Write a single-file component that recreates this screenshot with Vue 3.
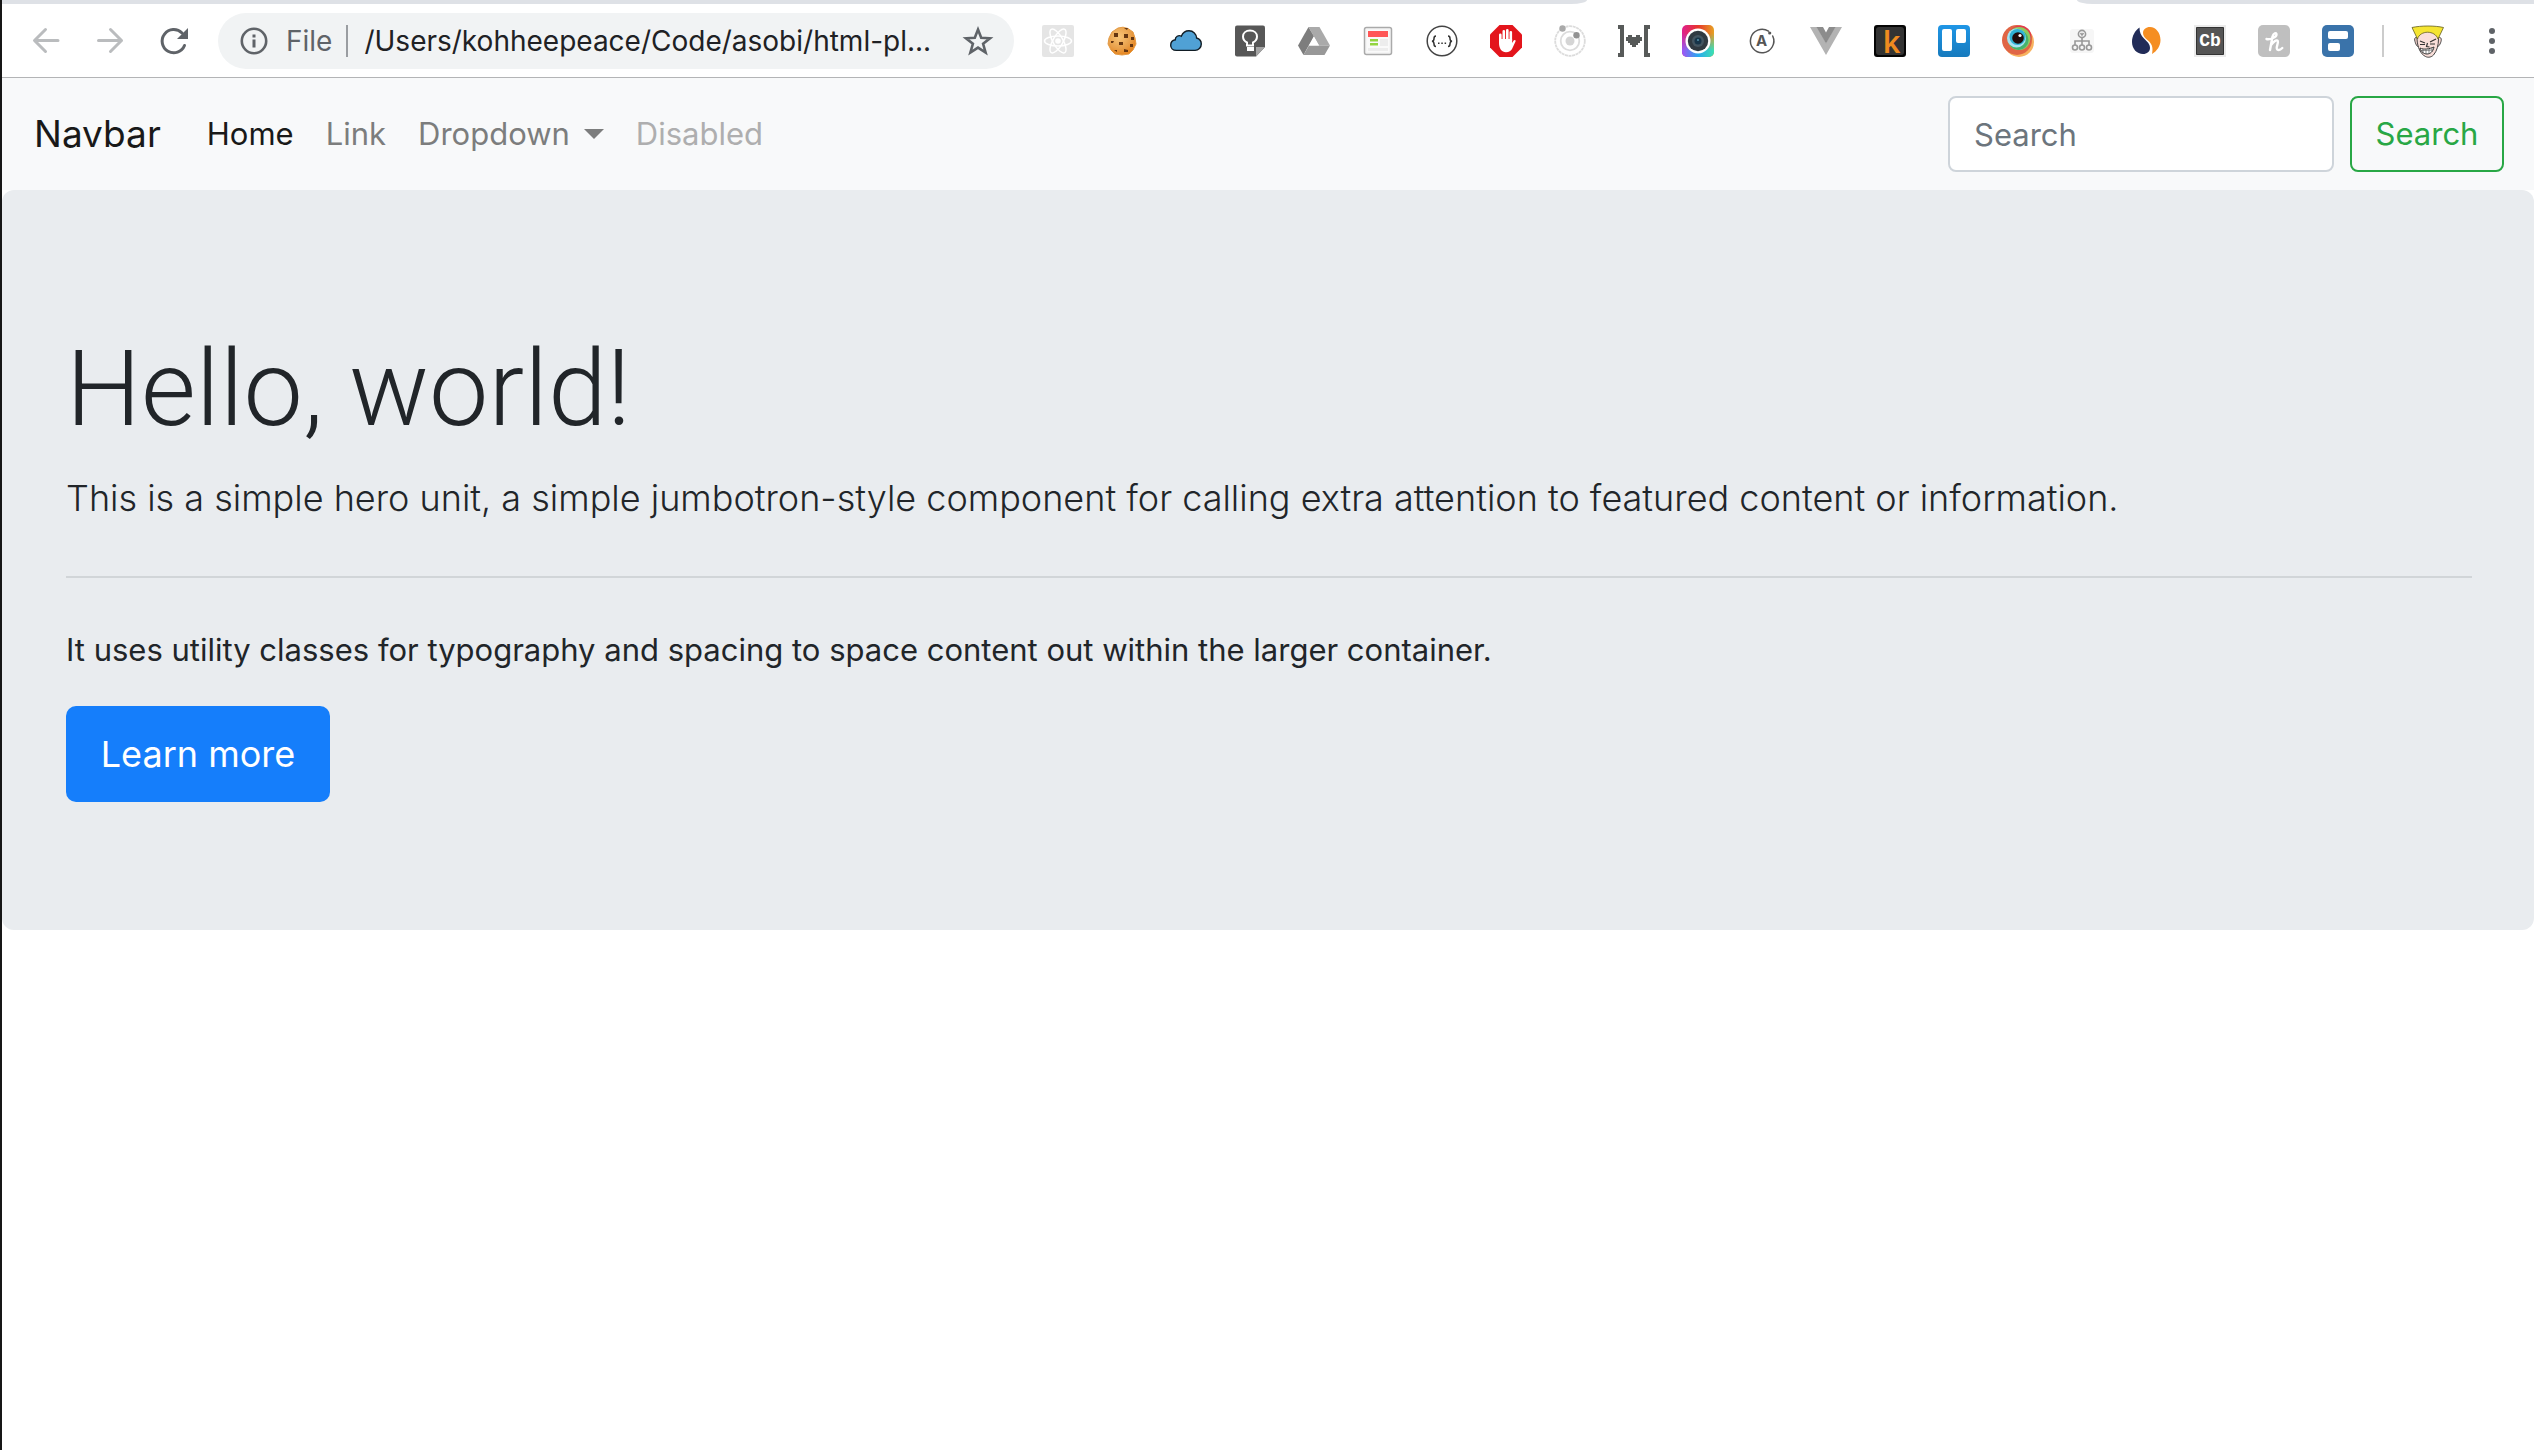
<script setup>
import { ref } from 'vue'

const query = ref('')
</script>

<template>
  <div class="window">
    <div class="tabstrip" aria-hidden="true">
      <div class="strip-left"></div>
      <div class="strip-active"></div>
      <div class="strip-right"></div>
    </div>

    <header class="toolbar">
      <button class="tool" type="button" aria-label="Back" disabled>
        <svg viewBox="0 0 32 32"><path d="M28 15.500H5M15.500 4.500 4.500 15.500l11 11" fill="none" stroke="#babcbe" stroke-width="3" stroke-linecap="round" stroke-linejoin="round" /></svg>
      </button>
      <button class="tool" type="button" aria-label="Forward" disabled>
        <svg viewBox="0 0 32 32"><path d="M4.500 15.500h23M16.500 4.500l11 11-11 11" fill="none" stroke="#babcbe" stroke-width="3" stroke-linecap="round" stroke-linejoin="round" /></svg>
      </button>
      <button class="tool" type="button" aria-label="Reload">
        <svg viewBox="0 0 32 32"><path d="M26.500 20.500A11.600 11.600 0 1 1 24 8" fill="none" stroke="#5f6368" stroke-width="3" stroke-linecap="round" /><path d="M30 3v11H19z" fill="#5f6368" /></svg>
      </button>

      <div class="omnibox">
        <svg class="info" viewBox="0 0 32 32" aria-hidden="true"><circle cx="16" cy="16" r="12.200" fill="none" stroke="#5f6368" stroke-width="2.600" /><path d="M14.500 9.500h3v3h-3zM14.500 14.500h3v8h-3z" fill="#5f6368" /></svg>
        <span class="scheme">File</span>
        <span class="bar"></span>
        <span class="url">/Users/kohheepeace/Code/asobi/html-pl...</span>
        <button class="star" type="button" aria-label="Bookmark this page">
          <svg viewBox="0 0 32 32"><path d="M16 4.500l3.200 8.300 8.800.5-6.900 5.500 2.500 8.700-7.600-4.900-7.600 4.900 2.500-8.700L4 13.300l8.800-.5z" fill="none" stroke="#5f6368" stroke-width="2.600" /></svg>
        </button>
      </div>

      <button class="tool" type="button" aria-label="React">
        <svg viewBox="0 0 32 32"><rect width="32" height="32" rx="2" fill="#e5e5e5" /><g fill="none" stroke="#fff" stroke-width="1.500"><ellipse cx="16" cy="16" rx="13.500" ry="5" /><ellipse cx="16" cy="16" rx="13.500" ry="5" transform="rotate(60 16 16)" /><ellipse cx="16" cy="16" rx="13.500" ry="5" transform="rotate(120 16 16)" /></g><circle cx="16" cy="16" r="2.800" fill="#fff" /></svg>
      </button>
      <button class="tool" type="button" aria-label="Cookies">
        <svg viewBox="0 0 32 32">
          <defs><radialGradient id="cookie" cx=".4" cy=".35" r=".7"><stop offset="0" stop-color="#f8c578" /><stop offset=".6" stop-color="#e9a04a" /><stop offset="1" stop-color="#e57f16" /></radialGradient></defs>
          <path d="M12 3l5-.8 5 1.300 5 3.500 2 6 1 6-3 6-4 4-7 1-7-1-4-4-3-6 1-6 3-6z" fill="url(#cookie)" stroke="#e39a45" stroke-linejoin="round" />
          <path d="M8 8h4v4H8zM18 9h4v4h-4zM13 17h4v3h-4zM18 3h4l-1 2zM25 12h3v3h-3zM24 19h3v3h-3zM5 16h3l-1 2H5zM8 25h3v2zM18 24l4 1v2h-4z" fill="#653611" />
        </svg>
      </button>
      <button class="tool" type="button" aria-label="Cloud">
        <svg viewBox="0 0 32 32"><path d="M6.500 25.400C2.500 25.400.7 22.800.7 20.200c0-3 2-5 4.600-5.400-.2-3 3.200-5.200 6-3.600C12.800 7.700 15.500 5.800 19 5.800c4.300 0 7.400 3.200 7.600 7.200 3 .8 4.700 3.300 4.700 6.100 0 3.600-2.800 6.300-6.300 6.300z" fill="#50a1d5" stroke="#111c24" stroke-width="1.400" /></svg>
      </button>
      <button class="tool" type="button" aria-label="Keep">
        <svg viewBox="0 0 32 32"><path d="M3 .5h26q2 0 2 2V22l-9 9.500H3q-2 0-2-2v-27q0-2 2-2z" fill="#575757" /><path d="M31 22v0l-9 9.500V22z" fill="#a5a5a5" /><path d="M13 20.500v-3c-3-1.500-4-4-4-6 0-3.500 3-6 7-6s7 2.500 7 6c0 2-1 4.500-4 6v3z" fill="none" stroke="#fff" stroke-width="2" /><path d="M13 22h7v4h-7z" fill="#fff" /></svg>
      </button>
      <button class="tool" type="button" aria-label="Drive">
        <svg viewBox="0 0 32 32"><path d="M10.500 2 0 20.500 5.500 30 16 11z" fill="#7d7d7d" /><path d="M10.500 2h11L32 20.500H21z" fill="#aaa" /><path d="M11 20.500h21L26.500 30h-21z" fill="#989898" /><path d="M16 12l5 8.500H11z" fill="#fff" /></svg>
      </button>
      <button class="tool" type="button" aria-label="Page layout">
        <svg viewBox="0 0 32 32"><rect x="2.500" y="2.500" width="27" height="27" rx="2" fill="#f5f5f5" stroke="#aaa" stroke-width="1.500" /><path d="M5 5h22v22H5z" fill="#fafafa" /><path d="M6 6h20v6H6z" fill="#ff5757" /><path d="M8 14h8v2.500H8zM8 18h8v2.500H8z" fill="#93d53f" /><path d="M18 14h8v7h-8zM6 23h20v3H6z" fill="#ededed" /></svg>
      </button>
      <button class="tool" type="button" aria-label="JSON viewer">
        <svg viewBox="0 0 32 32"><circle cx="16" cy="16" r="14.800" fill="#fff" stroke="#444" stroke-width="1.500" /><path d="M10 11c-2 0-2 1-2 2.500S8 16 6 16.200c2 .3 2 1.300 2 2.800S8 21.500 10 21.500M22 11c2 0 2 1 2 2.500s0 2.500 2 2.700c-2 .3-2 1.300-2 2.800s0 2.500-2 2.500" fill="none" stroke="#333" stroke-width="1.500" /><path d="M12 17.500h1.500v1.500H12zM15.300 17.500h1.500v1.500h-1.500zM18.600 17.500h1.500v1.500h-1.500z" fill="#333" /></svg>
      </button>
      <button class="tool" type="button" aria-label="Ad blocker">
        <svg viewBox="0 0 32 32"><path d="M9.500 0h13L32 9.500v13L22.500 32h-13L0 22.500v-13z" fill="#e3151c" /><path d="M10.300 17V9.800M13.800 16V6.300M17.300 15V5.300M20.800 16V7.300" fill="none" stroke="#fff" stroke-width="2.600" stroke-linecap="round" /><path d="M9 14h13.100v4l1.600-2.500c1-1.200 2.300-.5 1.800 1L22 24c-1 2-3 3.200-6 3.200-4.300 0-7-3.700-7-9.200z" fill="#fff" /></svg>
      </button>
      <button class="tool" type="button" aria-label="Orbit">
        <svg viewBox="0 0 32 32"><g fill="none" stroke="#dcdcdc" stroke-width="1.800"><circle cx="16" cy="16" r="14.800" stroke-dasharray="3 .6" /><circle cx="16" cy="16" r="9.300" /></g><circle cx="16" cy="16" r="4.500" fill="#d5d5d5" /><circle cx="8.500" cy="3.500" r="3.200" fill="#a9a9a9" /><circle cx="22.500" cy="10.200" r="3.200" fill="#929292" /></svg>
      </button>
      <button class="tool" type="button" aria-label="Bracket heart">
        <svg viewBox="0 0 32 32"><path d="M0 0h6v32H0v-4h2V4H0zM26 0h6v4h-2v24h2v4h-6z" fill="#575a59" /><path d="M10 10h4v2h4v-2h4v2h2v4h-2v2h-2v2h-2v2h-4v-2h-2v-2h-2v-2H8v-4h2z" fill="#575a59" /></svg>
      </button>
      <button class="tool" type="button" aria-label="Camera">
        <svg viewBox="0 0 32 32">
          <defs>
            <linearGradient id="cam-top"><stop offset="0" stop-color="#e0208f" /><stop offset=".5" stop-color="#e6352b" /><stop offset="1" stop-color="#e7a224" /></linearGradient>
            <linearGradient id="cam-bottom"><stop offset="0" stop-color="#a054f5" /><stop offset=".5" stop-color="#29a8ef" /><stop offset="1" stop-color="#3ce0b2" /></linearGradient>
            <linearGradient id="cam-fade" x2="0" y2="1"><stop offset=".25" stop-color="#000" /><stop offset=".8" stop-color="#fff" /></linearGradient>
            <mask id="cam-mask"><rect width="32" height="32" fill="url(#cam-fade)" /></mask>
          </defs>
          <rect width="32" height="32" rx="5" fill="url(#cam-top)" /><rect width="32" height="32" rx="5" fill="url(#cam-bottom)" mask="url(#cam-mask)" />
          <circle cx="16" cy="16" r="12.500" fill="#fff" /><circle cx="16" cy="16" r="10.200" fill="#303a42" /><circle cx="16" cy="16" r="6" fill="#435561" /><circle cx="16" cy="16" r="3.500" fill="#163449" /><circle cx="16" cy="15" r="1" fill="#5590aa" />
        </svg>
      </button>
      <button class="tool" type="button" aria-label="Apollo">
        <svg viewBox="0 0 32 32"><path d="M22.500 6.200A11.700 11.700 0 1 0 26.700 11" fill="none" stroke="#555" stroke-width="1.500" stroke-linecap="round" /><circle cx="23.700" cy="8" r="1.600" fill="#555" /><text x="15.500" y="21" class="glyph-a" text-anchor="middle">A</text></svg>
      </button>
      <button class="tool" type="button" aria-label="Vue">
        <svg viewBox="0 0 32 32"><path d="M0 2h7l9 16 9-16h7L16 30z" fill="#b3b3b3" /><path d="M6.500 2H13l3 5.500L19 2h6.500L16 18.500z" fill="#8c8c8c" /></svg>
      </button>
      <button class="tool" type="button" aria-label="Kindle">
        <svg viewBox="0 0 32 32"><rect width="32" height="32" rx="3" fill="#050505" /><rect x="2" y="2" width="28" height="28" rx="3" fill="#333" /><text x="17.500" y="28" class="glyph-k" text-anchor="middle">k</text></svg>
      </button>
      <button class="tool" type="button" aria-label="Trello">
        <svg viewBox="0 0 32 32"><defs><linearGradient id="trello" x2="0" y2="1"><stop offset="0" stop-color="#1f96e6" /><stop offset="1" stop-color="#167abd" /></linearGradient></defs><rect width="32" height="32" rx="4" fill="url(#trello)" /><rect x="4" y="4" width="10" height="22" rx="2" fill="#fff" /><rect x="18" y="4" width="10" height="14" rx="2" fill="#fff" /></svg>
      </button>
      <button class="tool" type="button" aria-label="Eye">
        <svg viewBox="0 0 32 32"><circle cx="17" cy="17" r="15" fill="#f7b25f" /><circle cx="15" cy="15" r="15" fill="#e06545" /><circle cx="18" cy="12" r="11.500" fill="#e23b4b" /><circle cx="17" cy="13.500" r="11.500" fill="#8fc95e" /><circle cx="16.500" cy="15" r="10" fill="#45b36e" /><circle cx="14.500" cy="13" r="9.500" fill="#a9e2f2" /><circle cx="15.500" cy="12" r="8" fill="#2fb2d4" /><circle cx="16" cy="13" r="5.800" fill="#210d0c" /><circle cx="18" cy="10.500" r="1.600" fill="#fff" /></svg>
      </button>
      <button class="tool" type="button" aria-label="Site tree">
        <svg viewBox="0 0 32 32"><rect x="4" y="4" width="24" height="24" rx="3" fill="#f6f6f6" /><g fill="none" stroke="#999" stroke-width="1.600"><circle cx="16" cy="9" r="3.600" /><circle cx="9" cy="22.500" r="2.500" /><circle cx="16" cy="22.500" r="2.500" /><circle cx="23" cy="22.500" r="2.500" /><path d="M16 12.500V20M9 20v-4h14v4M14.500 8l1.500 2 1.500-2" /></g></svg>
      </button>
      <button class="tool" type="button" aria-label="Similar sites">
        <svg viewBox="0 0 32 32"><path d="M9.500 2.500C5 5.500 2 11 2 17c0 7 5 12 11 12 4 0 7-2.500 7-6 0-4-2.500-6-6-9.500-3-3-4.500-6-4.500-11z" fill="#222c58" /><path d="M20 2c-4 0-7 2.500-7 6 0 3 2 5 5 7.500 5 4.200 5 8.500 4 13.500 5-3 8.500-8 8.500-14C30.500 8 26 2 20 2z" fill="#f58e22" /></svg>
      </button>
      <button class="tool" type="button" aria-label="Codebase">
        <svg viewBox="0 0 32 32"><path d="M0 0h32v32H0z" fill="#ebebeb" /><path d="M2.500 2.500h27v27h-27z" fill="#555" stroke="#333" /><text x="16" y="20.500" class="glyph-cb" text-anchor="middle">Cb</text></svg>
      </button>
      <button class="tool" type="button" aria-label="Honey">
        <svg viewBox="0 0 32 32"><rect width="32" height="32" rx="5" fill="#bfbfbf" /><path d="M8.500 14c3 1 10-1.500 10-4.500 0-2.500-3-1.500-4 2L12 25M12.800 20.500c2-3.500 6-6.500 7-4.500s-2.500 7-.5 8.500c1.500 1 3.500 0 5-1.500" fill="none" stroke="#fff" stroke-width="2.400" stroke-linecap="round" stroke-linejoin="round" /></svg>
      </button>
      <button class="tool" type="button" aria-label="Form blocks">
        <svg viewBox="0 0 32 32"><rect width="32" height="32" rx="5" fill="#3a73aa" /><rect x="6" y="6" width="20" height="8" rx="2" fill="#fff" /><rect x="6" y="18" width="12" height="8" rx="2" fill="#fff" /></svg>
      </button>

      <span class="divider"></span>

      <button class="tool" type="button" aria-label="Profile">
        <svg viewBox="0 0 32 32">
          <path d="M5.500 13c-2-1.500-3.500 0-2.500 3.500s2.500 6 4 5M26 13c2-1.500 4 0 3 3.500s-3 6-4.500 5" fill="#f9d5cf" stroke="#444" />
          <path d="M5 14c0-5 4-8 10.500-8S26 9 26.500 14c0 6-1.500 12-5 16-2 2-5 3-8 1.500-5-2.500-8-9-8.500-17.500z" fill="#f9ded9" stroke="#444" />
          <path d="M0 2.500C9 .5 23 .5 31.500 2.500L26 14C23 5 8 5 5.500 14z" fill="#f5e532" stroke="#625d1f" stroke-width=".8" />
          <path d="M8 16l5 2M24 14l-6 3M8 19.500h5M18 19h5M15.500 18l-1 3.500 3 .5" fill="none" stroke="#333" stroke-width="1.200" />
          <path d="M8 23c4 2 9 1 14-1-1 5-4 7-7 7s-6-2-7-6z" fill="#fff" stroke="#333" /><path d="M11 24v4M14 24.500V29M17 24v4.500M20 23v4M8.500 25.500l12-.5" stroke="#555" stroke-width=".7" />
        </svg>
      </button>
      <button class="tool" type="button" aria-label="Menu">
        <svg viewBox="0 0 32 32"><g fill="#5f6368"><circle cx="16" cy="6" r="3" /><circle cx="16" cy="16" r="3" /><circle cx="16" cy="26" r="3" /></g></svg>
      </button>
    </header>

    <nav class="navbar">
      <a class="brand" href="#">Navbar</a>
      <ul class="links">
        <li><a class="link active" href="#">Home</a></li>
        <li><a class="link" href="#">Link</a></li>
        <li><a class="link toggle" href="#">Dropdown</a></li>
        <li><a class="link disabled" href="#" aria-disabled="true">Disabled</a></li>
      </ul>
      <form class="search" @submit.prevent>
        <input v-model="query" class="field" type="search" placeholder="Search" aria-label="Search" />
        <button class="submit" type="submit">Search</button>
      </form>
    </nav>

    <main class="jumbotron">
      <h1>Hello, world!</h1>
      <p class="lead">This is a simple hero unit, a simple jumbotron-style component for calling extra attention to featured content or information.</p>
      <hr />
      <p class="note">It uses utility classes for typography and spacing to space content out within the larger container.</p>
      <a class="more" href="#" role="button">Learn more</a>
    </main>
  </div>
</template>

<style>
body {
  margin: 0;
  background: #fff;
}
</style>

<style scoped>
.window {
  box-sizing: border-box;
  min-height: 100vh;
  border-left: 2px solid #161616;
  background: #fff;
  color: #212529;
  font-family: Inter, "Liberation Sans", sans-serif;
  font-size: 31px;
  line-height: 48px;
}

button,
input {
  font: inherit;
}

/* Browser chrome */
.tabstrip {
  display: flex;
  height: 4px;
}
.strip-left,
.strip-right {
  background: #dee1e6;
}
.strip-left {
  flex: 1586;
  border-bottom-right-radius: 16px 4px;
}
.strip-active {
  flex: 491;
}
.strip-right {
  flex: 457;
  border-bottom-left-radius: 16px 4px;
}

.toolbar {
  display: flex;
  align-items: center;
  height: 73px;
  padding: 0 10px 0 12px;
  border-bottom: 1px solid #b3b4b6;
}
.tool {
  display: flex;
  flex: none;
  align-items: center;
  justify-content: center;
  width: 64px;
  height: 56px;
  padding: 0;
  border: 0;
  background: none;
}
.tool svg,
.info,
.star svg {
  display: block;
  flex: none;
  width: 32px;
  height: 32px;
  overflow: visible;
}

.omnibox {
  box-sizing: border-box;
  display: flex;
  flex: 1;
  align-items: center;
  min-width: 0;
  height: 56px;
  margin: 0 12px;
  padding: 0 20px;
  border-radius: 28px;
  background: #f1f3f4;
  font-size: 28px;
}
.scheme {
  margin-left: 16px;
  color: #5f6368;
}
.bar {
  width: 2px;
  height: 32px;
  margin: 0 16px 0 14px;
  background: #9a9da1;
}
.url {
  flex: 1;
  color: #202124;
  white-space: nowrap;
}
.star {
  flex: none;
  padding: 0;
  border: 0;
  background: none;
}
.divider {
  flex: none;
  width: 2px;
  height: 32px;
  margin: 0 12px;
  background: #ccc;
}

.glyph-a {
  fill: #555;
  font: bold 15px Inter, sans-serif;
}
.glyph-k {
  fill: #ef8b1f;
  font: 600 30px "Noto Sans", sans-serif;
}
.glyph-cb {
  fill: #fff;
  font: bold 18px "Liberation Mono", monospace;
}

/* Page */
.navbar {
  display: flex;
  align-items: center;
  padding: 18px 30px 18px 32px;
  background: #f8f9fa;
}
.brand {
  margin-right: 30px;
  color: #191919;
  font-size: 37px;
  text-decoration: none;
}
.links {
  display: flex;
  flex: 1;
  margin: 0;
  padding: 0;
  list-style: none;
}
.link {
  display: flex;
  align-items: center;
  padding: 0 16px;
  color: #7c7d7d;
  text-decoration: none;
}
.link.active {
  color: #191919;
}
.link.disabled {
  color: #aeaeaf;
}
.toggle::after {
  margin-left: 14px;
  border-top: 10px solid;
  border-right: 10px solid transparent;
  border-left: 10px solid transparent;
  content: "";
}

.search {
  display: flex;
  gap: 16px;
}
.field,
.submit {
  box-sizing: border-box;
  height: 76px;
  border-radius: 8px;
}
.field {
  width: 386px;
  padding: 0 24px;
  border: 2px solid #ced4da;
  background: #fff;
  color: #495057;
  appearance: none;
}
.field::placeholder {
  color: #6c757d;
  opacity: 1;
}
.submit {
  width: 154px;
  padding: 0;
  border: 2px solid #28a745;
  background: transparent;
  color: #28a745;
}

.jumbotron {
  padding: 128px 62px 128px 64px;
  border-radius: 12px;
  background: #e9ecef;
}
h1 {
  margin: 0 0 8px;
  font-family: Roboto, sans-serif;
  font-size: 106px;
  font-weight: 300;
  line-height: 142px;
}
.lead {
  margin: 0;
  font-size: 36px;
  font-weight: 300;
  line-height: 60px;
}
hr {
  margin: 48px 0;
  border: 0;
  border-top: 2px solid #d1d5d8;
}
.note {
  margin: 0 0 32px;
}
.more {
  box-sizing: border-box;
  display: inline-block;
  min-width: 264px;
  padding: 18px 32px;
  border-radius: 10px;
  background: #157efb;
  color: #fff;
  font-size: 36px;
  line-height: 60px;
  text-align: center;
  text-decoration: none;
  vertical-align: top;
}
</style>
